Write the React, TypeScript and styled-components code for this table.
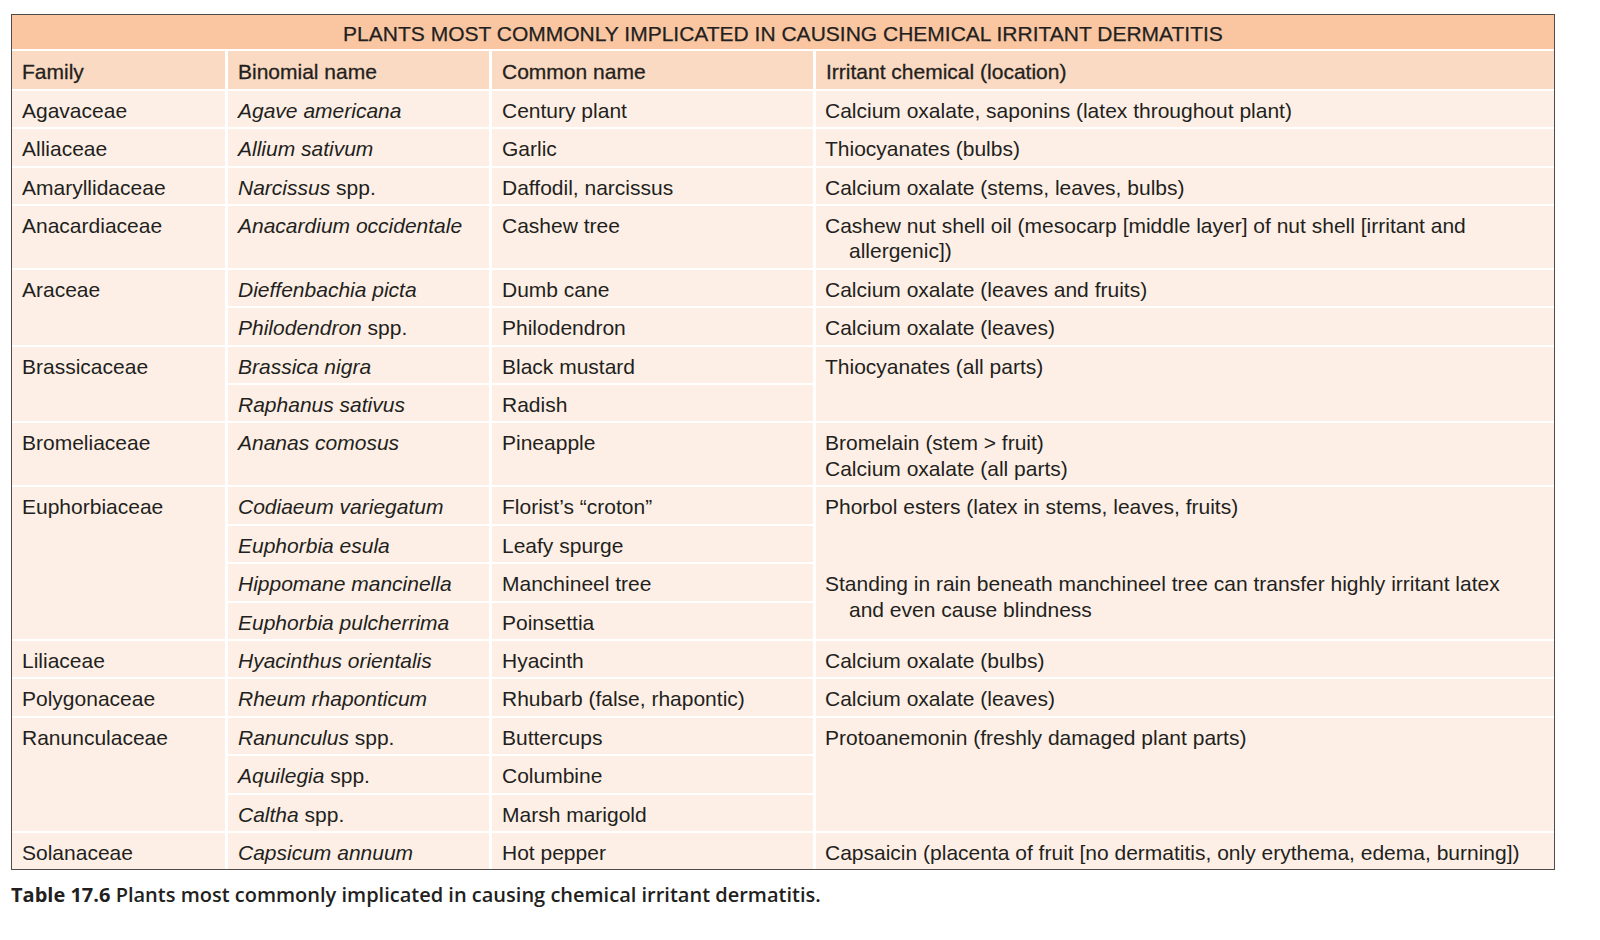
import styled, { createGlobalStyle } from "styled-components";

const GlobalStyle = createGlobalStyle`
  body {
    margin: 0;
    background: #ffffff;
    color: #231f20;
    font-family: "Liberation Sans", Arial, sans-serif;
  }
`;

const Page = styled.div`
  padding: 14px 0 0 11px;
`;

const Frame = styled.div`
  width: 1544px;
  box-sizing: border-box;
  border: 1.5px solid #4f4b4a;
  background: #fdefe6;
`;

const Table = styled.table`
  width: 100%;
  table-layout: fixed;
  border-collapse: separate;
  border-spacing: 0;
  font-size: 21px;
  line-height: 25.4px;
`;

const TitleCell = styled.th`
  background: #f9c6a1;
  padding: 6px 10px 3px;
  border-bottom: 2px solid #ffffff;
  font-weight: 400;
  -webkit-text-stroke: 0.25px #231f20;
  text-align: center;
  text-transform: uppercase;
`;

const HeadCell = styled.th<{ $last?: boolean }>`
  background: #fbdac3;
  padding: 8px 10px 4px;
  border-bottom: 2px solid #ffffff;
  border-right: ${(p) => (p.$last ? "none" : "3px solid #ffffff")};
  font-weight: 400;
  -webkit-text-stroke: 0.3px #231f20;
  text-align: left;
`;

const Cell = styled.td<{ $last?: boolean; $open?: boolean; $end?: boolean }>`
  background: #fdefe6;
  padding: 7px 10px 4px;
  vertical-align: top;
  border-bottom: ${(p) => (p.$open || p.$end ? "none" : "2px solid #ffffff")};
  border-right: ${(p) => (p.$last ? "none" : "3px solid #ffffff")};
`;

const Irritant = styled(Cell).attrs({ $last: true })`
  padding-left: 33px;
  padding-right: 14px;
`;

const Line = styled.div`
  text-indent: -24px;
`;

const Caption = styled.p`
  margin: 11px 0 0;
  font-family: "Open Sans", "Noto Sans", sans-serif;
  font-size: 20px;
  font-weight: 600;
  letter-spacing: 0;
  b {
    font-weight: 700;
  }
`;

function App() {
  return (
    <Page>
      <GlobalStyle />
      <Frame>
        <Table>
          <colgroup>
            <col style={{ width: 216 }} />
            <col style={{ width: 264 }} />
            <col style={{ width: 324 }} />
            <col />
          </colgroup>
          <thead>
            <tr>
              <TitleCell colSpan={4}>
                Plants most commonly implicated in causing chemical irritant dermatitis
              </TitleCell>
            </tr>
            <tr>
              <HeadCell>Family</HeadCell>
              <HeadCell>Binomial name</HeadCell>
              <HeadCell>Common name</HeadCell>
              <HeadCell $last>Irritant chemical (location)</HeadCell>
            </tr>
          </thead>
          <tbody>
            <tr>
              <Cell>Agavaceae</Cell>
              <Cell><i>Agave americana</i></Cell>
              <Cell>Century plant</Cell>
              <Irritant><Line>Calcium oxalate, saponins (latex throughout plant)</Line></Irritant>
            </tr>
            <tr>
              <Cell>Alliaceae</Cell>
              <Cell><i>Allium sativum</i></Cell>
              <Cell>Garlic</Cell>
              <Irritant><Line>Thiocyanates (bulbs)</Line></Irritant>
            </tr>
            <tr>
              <Cell>Amaryllidaceae</Cell>
              <Cell><i>Narcissus</i> spp.</Cell>
              <Cell>Daffodil, narcissus</Cell>
              <Irritant><Line>Calcium oxalate (stems, leaves, bulbs)</Line></Irritant>
            </tr>
            <tr>
              <Cell>Anacardiaceae</Cell>
              <Cell><i>Anacardium occidentale</i></Cell>
              <Cell>Cashew tree</Cell>
              <Irritant>
                <Line>
                  Cashew nut shell oil (mesocarp [middle layer] of nut shell [irritant and
                  allergenic])
                </Line>
              </Irritant>
            </tr>
            <tr>
              <Cell rowSpan={2}>Araceae</Cell>
              <Cell><i>Dieffenbachia picta</i></Cell>
              <Cell>Dumb cane</Cell>
              <Irritant><Line>Calcium oxalate (leaves and fruits)</Line></Irritant>
            </tr>
            <tr>
              <Cell><i>Philodendron</i> spp.</Cell>
              <Cell>Philodendron</Cell>
              <Irritant><Line>Calcium oxalate (leaves)</Line></Irritant>
            </tr>
            <tr>
              <Cell rowSpan={2}>Brassicaceae</Cell>
              <Cell><i>Brassica nigra</i></Cell>
              <Cell>Black mustard</Cell>
              <Irritant rowSpan={2}><Line>Thiocyanates (all parts)</Line></Irritant>
            </tr>
            <tr>
              <Cell><i>Raphanus sativus</i></Cell>
              <Cell>Radish</Cell>
            </tr>
            <tr>
              <Cell>Bromeliaceae</Cell>
              <Cell><i>Ananas comosus</i></Cell>
              <Cell>Pineapple</Cell>
              <Irritant>
                <Line>Bromelain (stem &gt; fruit)</Line>
                <Line>Calcium oxalate (all parts)</Line>
              </Irritant>
            </tr>
            <tr>
              <Cell rowSpan={4}>Euphorbiaceae</Cell>
              <Cell><i>Codiaeum variegatum</i></Cell>
              <Cell>Florist’s “croton”</Cell>
              <Irritant rowSpan={2} $open>
                <Line>Phorbol esters (latex in stems, leaves, fruits)</Line>
              </Irritant>
            </tr>
            <tr>
              <Cell><i>Euphorbia esula</i></Cell>
              <Cell>Leafy spurge</Cell>
            </tr>
            <tr>
              <Cell><i>Hippomane mancinella</i></Cell>
              <Cell>Manchineel tree</Cell>
              <Irritant rowSpan={2}>
                <Line>
                  Standing in rain beneath manchineel tree can transfer highly irritant latex
                  and even cause blindness
                </Line>
              </Irritant>
            </tr>
            <tr>
              <Cell><i>Euphorbia pulcherrima</i></Cell>
              <Cell>Poinsettia</Cell>
            </tr>
            <tr>
              <Cell>Liliaceae</Cell>
              <Cell><i>Hyacinthus orientalis</i></Cell>
              <Cell>Hyacinth</Cell>
              <Irritant><Line>Calcium oxalate (bulbs)</Line></Irritant>
            </tr>
            <tr>
              <Cell>Polygonaceae</Cell>
              <Cell><i>Rheum rhaponticum</i></Cell>
              <Cell>Rhubarb (false, rhapontic)</Cell>
              <Irritant><Line>Calcium oxalate (leaves)</Line></Irritant>
            </tr>
            <tr>
              <Cell rowSpan={3}>Ranunculaceae</Cell>
              <Cell><i>Ranunculus</i> spp.</Cell>
              <Cell>Buttercups</Cell>
              <Irritant rowSpan={3}><Line>Protoanemonin (freshly damaged plant parts)</Line></Irritant>
            </tr>
            <tr>
              <Cell><i>Aquilegia</i> spp.</Cell>
              <Cell>Columbine</Cell>
            </tr>
            <tr>
              <Cell><i>Caltha</i> spp.</Cell>
              <Cell>Marsh marigold</Cell>
            </tr>
            <tr>
              <Cell $end>Solanaceae</Cell>
              <Cell $end><i>Capsicum annuum</i></Cell>
              <Cell $end>Hot pepper</Cell>
              <Irritant $end>
                <Line>Capsaicin (placenta of fruit [no dermatitis, only erythema, edema, burning])</Line>
              </Irritant>
            </tr>
          </tbody>
        </Table>
      </Frame>
      <Caption>
        <b>Table 17.6</b> Plants most commonly implicated in causing chemical irritant dermatitis.
      </Caption>
    </Page>
  );
}

export default App;
